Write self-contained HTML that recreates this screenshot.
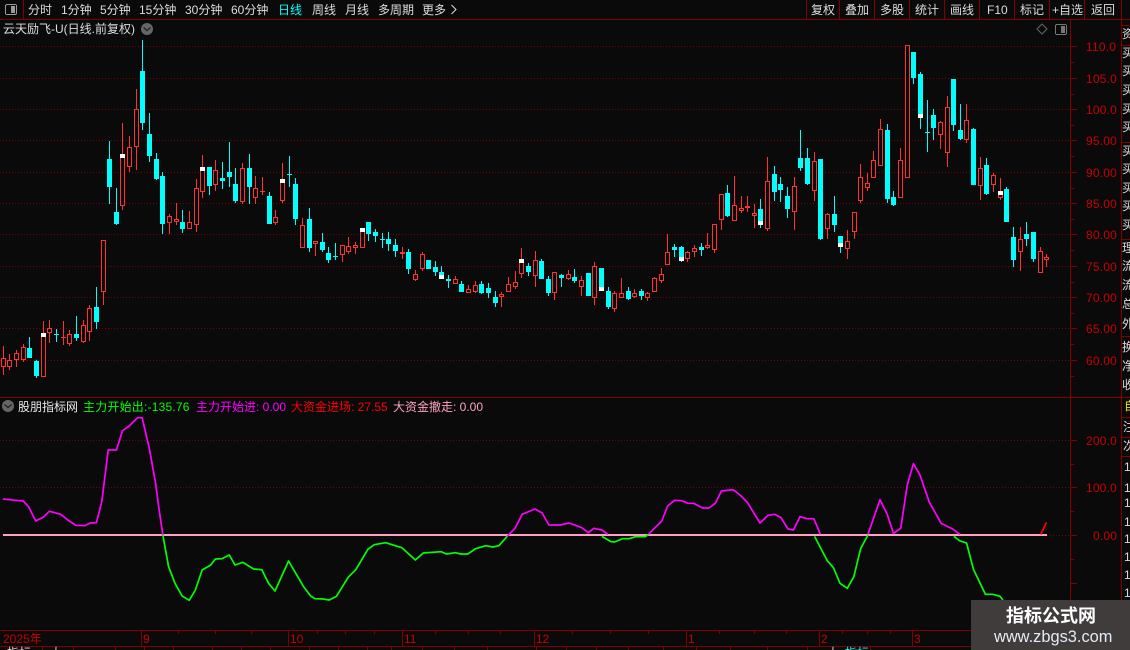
<!DOCTYPE html>
<html><head><meta charset="utf-8"><style>
html,body{margin:0;padding:0;background:#0a0a0a;width:1130px;height:650px;overflow:hidden}
#r{position:relative;width:1130px;height:650px;overflow:hidden;font:12px/14px "Liberation Sans","WenQuanYi Zen Hei","Noto Sans CJK SC",sans-serif;color:#dcdcdc}
#r span{position:absolute;white-space:nowrap}
svg{position:absolute;left:0;top:0}
.a{color:#c80000;letter-spacing:.2px}.d{color:#c80000}
#wm{position:absolute;left:971px;top:600px;width:159px;height:50px;background:#403c3c}
#rc{position:absolute;left:1122px;top:25px;width:8px;height:372px;overflow:hidden}
#rc span{left:0}
</style></head><body><div id="r">
<svg id="s" width="1130" height="650" shape-rendering="crispEdges">
<g stroke="#800000" fill="none">
<path d="M0 19.5H1130M23.5 0V19M806.5 0V19M839.5 0V19M874.5 0V19M909.5 0V19M944.5 0V19M979.5 0V19M1014.5 0V19M1049.5 0V19M1084.5 0V19M1121.5 0V650"/>
<path d="M0 397.5H1130M1070.5 20V630M0 630.5H1130M0 646.5H1130M1122 25.5H1130M1122 45.5H1130M1122 142.5H1130M1122 239.5H1130M1122 336.5H1130M1122 417.5H1130M1122 437.5H1130M1122 456.5H1130"/>
<path d="M141.5 631V646M288.5 631V646M402.5 631V646M534.5 631V646M686.5 631V646M819.5 631V646M912.5 631V646"/>
<path d="M178.5 631V634M215.5 631V634M251.5 631V634M317.5 631V634M345.5 631V634M374.5 631V634M435.5 631V634M468.5 631V634M500.5 631V634M572.5 631V634M610.5 631V634M648.5 631V634M719.5 631V634M754.5 631V634M786.5 631V634M842.5 631V634M867.5 631V634M890.5 631V634"/>
<path d="M42.5 647V650M73.5 647V650M115.5 647V650M144.5 647V650M173.5 647V650M212.5 647V650M241.5 647V650M270.5 647V650M309.5 647V650M338.5 647V650M367.5 647V650M391.5 647V650M422.5 647V650M454.5 647V650M487.5 647V650M536.5 647V650M566.5 647V650M596.5 647V650M628.5 647V650M663.5 647V650M696.5 647V650M730.5 647V650M767.5 647V650M807.5 647V650M870.5 647V650"/>
<path d="M1071 46.5H1077M1071 62.5H1074M1071 78.5H1077M1071 94.5H1074M1071 109.5H1077M1071 125.5H1074M1071 140.5H1077M1071 156.5H1074M1071 172.5H1077M1071 188.5H1074M1071 203.5H1077M1071 219.5H1074M1071 234.5H1077M1071 250.5H1074M1071 266.5H1077M1071 282.5H1074M1071 297.5H1077M1071 313.5H1074M1071 328.5H1077M1071 344.5H1074M1071 360.5H1077M1071 376.5H1074"/>
<path d="M1071 440.5H1077M1071 464.5H1074M1071 487.5H1077M1071 511.5H1074M1071 535.5H1077M1071 559.5H1074M1071 583.5H1077"/>
<path stroke-dasharray="1 2" stroke="#7a0000" d="M0 46.5H1070M0 78.5H1070M0 109.5H1070M0 140.5H1070M0 172.5H1070M0 203.5H1070M0 234.5H1070M0 266.5H1070M0 297.5H1070M0 328.5H1070M0 360.5H1070M0 440.5H1070M0 487.5H1070M1047 535.5H1070"/>
</g>
<g id="c"></g>
<rect x="3" y="534" width="1044" height="2" fill="#ffa0c0"/>
<g fill="none" stroke-width="1.7" stroke-linejoin="round" shape-rendering="auto">
<g transform="translate(0 395) scale(.35714 .33333)">
<polyline vector-effect="non-scaling-stroke" stroke="#ff00ff" points="8,312 45,316 65,318 80,335 100,378 122,366 138,349 150,352 170,358 190,375 212,391 238,392 252,384 270,383 285,320 303,165 326,165 343,107 362,93 385,68 398,68 418,160 435,260 445,340 456,420"/>
<polyline vector-effect="non-scaling-stroke" stroke="#00ff00" points="456,420 472,515 490,565 510,603 530,616 547,585 566,525 590,510 603,492 622,491 642,480 658,510 680,502 710,522 733,524 752,565 770,588 808,498 850,575 870,603 882,611 905,612 922,615 942,604 975,547 997,523 1030,463 1048,449 1080,443 1125,458 1163,495 1185,474 1235,470 1250,477 1275,473 1290,477 1310,477 1330,462 1360,452 1380,456 1397,452 1420,424"/>
<polyline vector-effect="non-scaling-stroke" stroke="#ff00ff" points="1420,424 1442,400 1462,358 1498,342 1518,354 1537,390 1568,390"/>
</g>
<g transform="translate(560 395) scale(.36364 .33333)">
<polyline vector-effect="non-scaling-stroke" stroke="#ff00ff" points="0,390 25,384 60,398 78,413 93,400 115,405 132,418"/>
<polyline vector-effect="non-scaling-stroke" stroke="#00ff00" points="115,424 140,440 150,441 172,431 190,431 208,425 235,425 243,418"/>
<polyline vector-effect="non-scaling-stroke" stroke="#ff00ff" points="243,418 280,378 296,333 315,316 335,317 352,325 368,325 392,339 410,339 427,325 444,288 476,284 495,300 515,322 550,384 572,361 590,358 607,367 627,402 642,405 660,365 680,371 698,371 716,418"/>
<polyline vector-effect="non-scaling-stroke" stroke="#00ff00" points="700,424 735,497 752,518 770,565 790,580 808,545 827,460 847,420"/>
<polyline vector-effect="non-scaling-stroke" stroke="#ff00ff" points="847,418 880,314 900,358 917,415 937,400 955,270 972,206 990,240 1015,320 1048,385 1080,402 1100,418"/>
<polyline vector-effect="non-scaling-stroke" stroke="#00ff00" points="1083,424 1100,438 1118,444 1137,523 1170,598 1190,598 1210,604 1218,615"/>
<polyline vector-effect="non-scaling-stroke" stroke="#ff0000" points="1322,418 1338,382"/>
</g>
</g>
<rect x="5.5" y="4.5" width="11" height="10" rx="1.5" fill="none" stroke="#9a9a9a"/><rect x="11" y="6" width="4" height="7" fill="#9a9a9a"/>
<rect x="1055.5" y="24.5" width="11" height="10" rx="1.5" fill="none" stroke="#777"/><rect x="1061" y="26" width="4" height="7" fill="#777"/>
<g shape-rendering="auto">
<path d="M1042 24L1047 29L1042 34L1037 29Z" fill="none" stroke="#666"/>
<circle cx="147" cy="29" r="6" fill="#666"/><path d="M143.5 27.5L147 30.5L150.5 27.5" fill="none" stroke="#222" stroke-width="1.3"/>
<circle cx="8" cy="406" r="6" fill="#666"/><path d="M4.5 404.5L8 407.5L11.5 404.5" fill="none" stroke="#222" stroke-width="1.3"/>
<path d="M451.5 5L456 9.5L451.5 14" fill="none" stroke="#dcdcdc"/>
</g>
</svg>
<span style="left:28px;top:3px">分时</span><span style="left:61px;top:3px">1分钟</span><span style="left:100px;top:3px">5分钟</span><span style="left:139px;top:3px">15分钟</span><span style="left:185px;top:3px">30分钟</span><span style="left:231px;top:3px">60分钟</span><span style="left:278px;top:3px;color:#00ffff">日线</span><span style="left:312px;top:3px">周线</span><span style="left:345px;top:3px">月线</span><span style="left:378px;top:3px">多周期</span><span style="left:422px;top:3px">更多</span>
<span style="left:811px;top:3px">复权</span><span style="left:845px;top:3px">叠加</span><span style="left:880px;top:3px">多股</span><span style="left:915px;top:3px">统计</span><span style="left:950px;top:3px">画线</span><span style="left:987px;top:3px">F10</span><span style="left:1020px;top:3px">标记</span><span style="left:1052px;top:3px">+自选</span><span style="left:1091px;top:3px">返回</span>
<span style="left:3px;top:22px">云天励飞-U(日线.前复权)</span>
<span style="left:18px;top:400px;color:#e8e8e8">股朋指标网</span>
<span style="left:83px;top:400px;color:#00ff00;letter-spacing:.2px">主力开始出:-135.76</span><span style="left:196px;top:400px;color:#ff00ff">主力开始进: 0.00</span><span style="left:291px;top:400px;color:#ff0000">大资金进场: 27.55</span><span style="left:393px;top:400px;color:#ffa0c0">大资金撤走: 0.00</span>
<span class="a" style="left:1086px;top:40px">110.0</span><span class="a" style="left:1086px;top:72px">105.0</span><span class="a" style="left:1086px;top:103px">100.0</span><span class="a" style="left:1086px;top:134px">95.00</span><span class="a" style="left:1086px;top:166px">90.00</span><span class="a" style="left:1086px;top:197px">85.00</span><span class="a" style="left:1086px;top:228px">80.00</span><span class="a" style="left:1086px;top:260px">75.00</span><span class="a" style="left:1086px;top:291px">70.00</span><span class="a" style="left:1086px;top:322px">65.00</span><span class="a" style="left:1086px;top:354px">60.00</span>
<span class="a" style="left:1086px;top:434px">200.0</span><span class="a" style="left:1086px;top:481px">100.0</span><span class="a" style="left:1093px;top:529px">0.00</span>
<span class="d" style="left:3px;top:632px">2025年</span><span class="d" style="left:143px;top:632px">9</span><span class="d" style="left:290px;top:632px">10</span><span class="d" style="left:404px;top:632px">11</span><span class="d" style="left:536px;top:632px">12</span><span class="d" style="left:688px;top:632px">1</span><span class="d" style="left:821px;top:632px">2</span><span class="d" style="left:914px;top:632px">3</span>
<span style="left:7px;top:646px">指标</span><span style="left:50px;top:646px">大</span><span style="left:827px;top:646px">大</span><span style="left:845px;top:646px;color:#00ffff">指标</span>
<div id="rc">
<span style="top:2px">资</span><span style="top:21px">买</span><span style="top:39px">买</span><span style="top:58px">买</span><span style="top:77px">买</span><span style="top:95px">买</span><span style="top:119px">买</span><span style="top:137px">买</span><span style="top:156px">买</span><span style="top:174px">买</span><span style="top:193px">买</span><span style="top:216px">理</span><span style="top:234px">流</span><span style="top:253px">流</span><span style="top:272px">总</span><span style="top:292px">外</span><span style="top:315px">换</span><span style="top:334px">净</span><span style="top:353px">收</span>
</div>
<span style="left:1124px;top:399px;color:#e6e600">自</span><span style="left:1123px;top:420px">注</span><span style="left:1123px;top:439px">次</span>
<span style="left:1124px;top:460px">1</span><span style="left:1124px;top:481px">1</span><span style="left:1124px;top:496px">1</span><span style="left:1124px;top:515px">1</span><span style="left:1124px;top:532px">1</span><span style="left:1124px;top:550px">1</span><span style="left:1124px;top:568px">1</span><span style="left:1124px;top:586px">1</span>
<div id="wm"></div>
<span style="left:1006px;top:605px;font-size:18px;line-height:20px;font-weight:bold;color:#fff;font-family:'Noto Sans CJK SC',sans-serif">指标公式网</span>
<span style="left:994px;top:628px;font-size:16.4px;line-height:18px;color:#e2eaf5">www.zbgs3.com</span>
</div>
<script>
var S=[[0,30,"10,948,985,1010,1034,r;28,972,991,1010,1019,r;49,960,970,989,1010,r;70,942,952,989,995,r;88,921,954,984,984,c;109,990,993,1037,1043,c;130,873,909,1040,1040,r,909,920;148,870,895,908,938,r;169,897,912,915,936,c;190,873,922,925,945,r;208,900,913,941,947,r;229,858,912,924,933,c;250,870,886,935,938,r;268,825,835,905,933,r;289,771,831,876,897,c;310,631,631,785,825,r;328,333,387,471,522,c;349,474,546,582,585,c;367,279,373,529,540,r,373,384;388,318,352,410,426,r;409,177,238,352,420,r;427,30,123,279,300,c;448,249,312,378,396,c;469,369,387,447,450,c;487,427,438,582,612,c;508,552,559,578,612,r;529,519,568,575,585,r;547,540,576,597,609,c;568,543,577,596,596,r;589,447,475,584,606,r;607,375,411,485,504,r,411,423;628,411,411,468,495,c;646,390,421,464,483,r;667,396,444,453,477,c;688,336,426,441,471,c;706,414,462,513,519,c;727,399,415,515,521,r;748,372,414,471,522,c;766,438,475,503,522,r;787,441,483,487,495,r;808,486,498,582,582,c;826,540,562,578,585,r"],
[280,130,"7,99,147,212,219,r,147,159;28,78,132,135,171,c;46,144,162,267,285,c;67,264,286,353,353,r;88,234,267,354,366,c;106,333,334,341,378,r;127,309,336,360,366,c;145,351,369,390,399,c;166,339,378,381,390,c;187,346,346,374,396,r;205,321,349,365,372,r;226,336,346,353,372,r;247,294,294,353,353,r,294,306;265,276,276,312,333,c;286,297,306,318,336,c;307,309,327,330,354,c;325,306,327,342,363,c;346,327,345,363,381,c;367,351,367,371,387,r;385,357,366,417,432,c;406,420,433,449,453,r;427,366,373,418,423,r;445,390,390,417,417,c;466,393,411,426,438,c;484,408,426,447,447,c,435,447;505,435,448,452,474,c;526,438,448,461,461,r;544,453,462,486,486,c;565,465,478,488,488,r;586,453,466,485,489,r;604,453,462,489,492,c;625,459,474,489,504,c;646,483,501,519,531,c;664,486,493,502,531,r;685,441,463,485,485,r;706,423,457,470,477,r;724,354,387,431,444,r,387,399;745,399,408,426,438,c;766,363,391,437,471,r;784,387,393,447,447,c;805,438,447,489,498,c;823,427,427,488,510,r"],
[500,130,"184,432,435,444,471,c;205,420,433,446,450,r;223,417,441,453,459,c;244,438,451,470,498,r;265,430,430,498,498,c;283,396,409,503,525,r;304,414,414,483,483,c,471,483;325,471,483,531,537,c;343,483,490,536,546,r;364,444,490,503,503,r;385,471,483,507,510,c;403,477,490,500,504,r;424,477,483,498,510,c;442,486,490,503,513,r;463,441,445,485,485,r;484,414,433,452,459,r;502,312,367,404,404,r;523,342,351,360,381,c;544,348,351,393,396,c,381,393;562,363,367,386,396,r;583,345,355,365,381,r;604,339,351,360,378,c;622,309,346,353,357,r;643,283,283,359,369,r;664,193,193,269,300,r;682,165,189,258,261,c;703,138,226,272,272,r;724,198,235,242,249,r;742,198,229,233,246,r;763,222,250,257,294,r;781,207,237,285,294,c,273,285;802,81,154,296,303,r;823,108,132,186,213,c"],
[760,40,"61,411,432,450,486,c;82,441,468,507,534,c;103,411,439,515,570,r;121,270,354,384,393,c;142,324,354,432,435,c;163,336,364,452,483,r;181,357,357,597,600,c;202,520,523,566,597,r;223,468,522,555,576,c;241,588,588,621,639,c,609,621;262,570,604,626,657,r;283,517,517,575,597,r;301,372,412,482,489,r;322,399,430,443,453,r;340,333,361,413,413,r;361,237,268,377,377,r;382,252,270,477,489,c;400,453,471,495,498,c;421,324,361,473,473,r;442,16,16,413,413,r;460,36,36,114,132,c;481,96,102,234,267,c,222,234;502,180,276,279,336,c;520,207,225,264,300,c;541,243,247,284,327,r;562,168,202,338,381,r;580,117,117,255,273,c;601,192,270,297,300,c;619,192,241,299,309,r;640,264,267,435,435,c;661,351,385,437,480,r;679,354,375,462,465,c;700,399,406,434,456,r;721,414,453,473,480,r,453,465;739,441,447,546,546,c;760,561,591,660,681,c;781,561,598,635,693,r;799,546,582,597,618,c;820,576,576,657,666,c;841,621,634,698,698,r;859,642,652,659,681,r"]];
var h="",R="#ff3232",C="#00ffff";
S.forEach(function(g){var ox=g[0],oy=g[1];g[2].split(";").forEach(function(l){var p=l.split(","),x=Math.floor(+p[0]/3+ox),
f=function(v){return Math.round(+v/3+oy)},hi=f(p[1]),t=f(p[2]),b=f(p[3]),lo=f(p[4]),col=p[5]=="r"?R:C;
if(lo>hi)h+='<rect x="'+x+'" y="'+hi+'" width="1" height="'+(lo-hi)+'" fill="'+col+'"/>';
if(b-t<2){h+='<rect x="'+(x-2)+'" y="'+t+'" width="5" height="'+Math.max(1,b-t)+'" fill="'+col+'"/>';}
else if(p[5]=="r"){h+='<rect x="'+(x-2)+'" y="'+t+'" width="5" height="'+(b-t)+'" fill="#0a0a0a"/><rect x="'+(x-1.5)+'" y="'+(t+.5)+'" width="4" height="'+(b-t-1)+'" fill="none" stroke="'+R+'"/>';}
else{h+='<rect x="'+(x-2)+'" y="'+t+'" width="5" height="'+(b-t)+'" fill="'+C+'"/>';}
if(p[6]){h+='<rect x="'+(x-2)+'" y="'+f(p[6])+'" width="5" height="'+(f(p[7])-f(p[6]))+'" fill="#fff"/>';}
});});
document.getElementById("c").innerHTML=h;
</script>
</body></html>
